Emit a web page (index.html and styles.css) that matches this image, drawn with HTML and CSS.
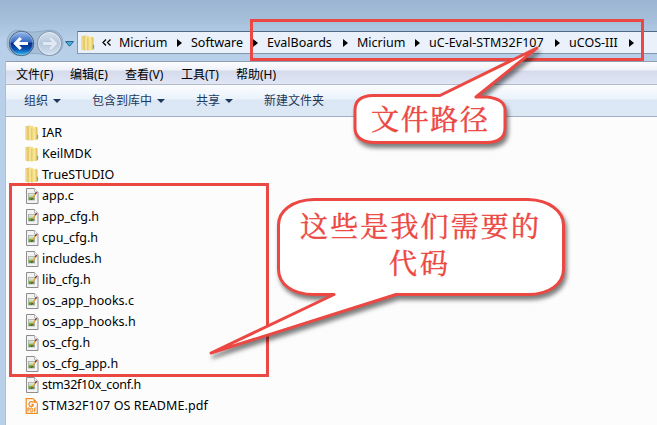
FILE: index.html
```html
<!DOCTYPE html>
<html lang="zh-CN">
<head>
<meta charset="utf-8">
<title>uCOS-III</title>
<link rel="stylesheet" href="styles.css">
</head>
<body>
<svg class="defs" width="0" height="0">
  <defs>
    <linearGradient id="gold" x1="0" x2="1"><stop offset="0" stop-color="#e3c75e"/><stop offset=".5" stop-color="#fbeb9f"/><stop offset="1" stop-color="#dcb94e"/></linearGradient>
    <linearGradient id="blue" x1="0" y1="0" x2="0" y2="1"><stop offset="0" stop-color="#9cbcec"/><stop offset=".42" stop-color="#3c6fc4"/><stop offset=".5" stop-color="#062f86"/><stop offset=".75" stop-color="#0a57b5"/><stop offset="1" stop-color="#35c5f5"/></linearGradient>
    <linearGradient id="pale" x1="0" y1="0" x2="0" y2="1"><stop offset="0" stop-color="#d5e0ec"/><stop offset=".5" stop-color="#b7c9dd"/><stop offset="1" stop-color="#d3e1f0"/></linearGradient>
    <linearGradient id="leaf" x1="0" y1="0" x2="0" y2="1"><stop offset="0" stop-color="#e8efea"/><stop offset=".45" stop-color="#c0d2b0"/><stop offset=".6" stop-color="#82bd2c"/><stop offset="1" stop-color="#2d7d16"/></linearGradient>
    <symbol id="folder" viewBox="0 0 14 16">
      <path d="M.5 1.200 5 .4l1 1v13.200l-2 1-3.500-1z" fill="#e3c86f"/>
      <path d="M4 .8h3.500l1 1.500V14l-4.500 1.500z" fill="#f5e18d"/>
      <path d="M6 2.800 11.500 1.800l1 1v12l-6.500.8z" fill="url(#gold)"/>
      <path d="M1.800 2v12M5 1.500v13.500" stroke="#f6e49d" stroke-width=".8"/>
      <path d="M12.500 9.800v4" stroke="#54a9d6" stroke-width="1.200"/>
    </symbol>
    <symbol id="source" viewBox="0 0 14 16">
      <path d="M1.500.5h8l3.500 3.500v11.500H1.500z" fill="#f3f3f3" stroke="#8d8d8d"/>
      <path d="M9.500.5V4H13" fill="#fff" stroke="#aaa" stroke-width=".8"/>
      <rect x="3.500" y="5.500" width="6" height="6.500" fill="url(#leaf)" stroke="#a3aaa3" stroke-width=".8"/>
      <path d="m7.300 10.300 3.600-5" stroke="#e5a638" stroke-width="1.400"/>
      <path d="m10.300 6 1.300-1.800" stroke="#7e2c34" stroke-width="1.400"/>
      <path d="m6.400 11.500 1.200-1.600" stroke="#333"/>
    </symbol>
    <symbol id="pdf" viewBox="0 0 14 16">
      <path d="M8.500.7H1.200V15.300h11.100V5" fill="none" stroke="#f18a21" stroke-width="1.200"/>
      <path d="M8.500.3v4.500h4.400z" fill="#f18a21"/>
      <path d="M8.300 4.100C5 2.500 3.300 5 4.200 7.200s4 1.900 4-.7H6.400" fill="none" stroke="#f18a21" stroke-width="1.300"/>
      <path d="M2.800 14v-4h1.400v2H2.800M5.800 10h1.100l.8 1v2l-.8 1H5.800zM9.400 14v-4h1.900M9.400 12h1.500" fill="none" stroke="#f18a21" stroke-width=".9"/>
    </symbol>
  </defs>
</svg>
<div class="window">
  <header class="address">
    <svg class="nav" width="64" height="30" viewBox="0 0 64 30">
      <path d="M20 2.500c10 2 14 2 26 0 10-2 17 4 17 12.500s-8 14-17 12c-10-2-14-2-23 0C13 29 7 23 7 15S12 1 20 2.500z" fill="#9db5ce" fill-opacity=".65" stroke="#8297b1" stroke-width=".6"/>
      <circle cx="21.500" cy="15.500" r="12.200" fill="url(#blue)" stroke="#4c627f"/>
      <circle cx="21.500" cy="15.500" r="11.300" fill="none" stroke="#c5e0f4" stroke-opacity=".6" stroke-width=".7"/>
      <path d="M20.800 10 15.500 15.500l5.300 5.500M16 15.500h12" fill="none" stroke="#fff" stroke-width="3.200"/>
      <circle cx="49.500" cy="15.500" r="12" fill="url(#pale)" stroke="#7f91a8"/>
      <circle cx="49.500" cy="15.500" r="11" fill="none" stroke="#e5eef8" stroke-width=".8"/>
      <path d="m50.200 10 5.300 5.500-5.300 5.500M55 15.500H43" fill="none" stroke="#b4c3d4" stroke-width="4"/>
      <path d="m50.200 10 5.300 5.500-5.300 5.500M55 15.500H43" fill="none" stroke="#e1eaf3" stroke-width="2.800"/>
    </svg>
    <svg class="recent" width="9" height="6" viewBox="0 0 9 6"><path d="M.6.6h7.800L4.500 5.200z" fill="#42b8e7" stroke="#245b80"/></svg>
    <nav class="crumbs">
      <svg class="crumb-icon" width="14" height="16"><use href="#folder"/></svg>
      <svg class="more" width="10" height="7" viewBox="0 0 10 7"><path d="M4 .5 1 3.500l3 3M8.500.5l-3 3 3 3" fill="none" stroke="#000" stroke-width="1.300"/></svg>
      <span class="crumb w-micrium">Micrium</span><i class="arrow"></i>
      <span class="crumb w-software">Software</span><i class="arrow"></i>
      <span class="crumb w-boards">EvalBoards</span><i class="arrow"></i>
      <span class="crumb w-micrium">Micrium</span><i class="arrow"></i>
      <span class="crumb w-eval">uC-Eval-STM32F107</span><i class="arrow"></i>
      <span class="crumb w-ucos">uCOS-III</span><i class="arrow"></i>
    </nav>
  </header>
  <div class="frame">
    <nav class="menu">
      <span class="m1">文件(F)</span><span class="m2">编辑(E)</span><span class="m3">查看(V)</span><span class="m4">工具(T)</span><span class="m5">帮助(H)</span>
    </nav>
    <div class="toolbar">
      <span class="t1">组织<i class="down"></i></span><span class="t2">包含到库中<i class="down"></i></span><span class="t3">共享<i class="down"></i></span><span class="t4">新建文件夹</span>
    </div>
    <ul class="files">
      <li><svg><use href="#folder"/></svg><span>IAR</span></li>
      <li><svg><use href="#folder"/></svg><span>KeilMDK</span></li>
      <li><svg><use href="#folder"/></svg><span>TrueSTUDIO</span></li>
      <li><svg><use href="#source"/></svg><span>app.c</span></li>
      <li><svg><use href="#source"/></svg><span>app_cfg.h</span></li>
      <li><svg><use href="#source"/></svg><span>cpu_cfg.h</span></li>
      <li><svg><use href="#source"/></svg><span>includes.h</span></li>
      <li><svg><use href="#source"/></svg><span>lib_cfg.h</span></li>
      <li><svg><use href="#source"/></svg><span>os_app_hooks.c</span></li>
      <li><svg><use href="#source"/></svg><span>os_app_hooks.h</span></li>
      <li><svg><use href="#source"/></svg><span>os_cfg.h</span></li>
      <li><svg><use href="#source"/></svg><span>os_cfg_app.h</span></li>
      <li><svg><use href="#source"/></svg><span class="conf">stm32f10x_conf.h</span></li>
      <li><svg><use href="#pdf"/></svg><span class="readme">STM32F107 OS README.pdf</span></li>
    </ul>
  </div>
</div>
<svg class="notes" width="657" height="425" viewBox="0 0 657 425">
  <g class="outline">
    <rect x="251.500" y="20.500" width="391" height="39"/>
    <rect x="10.500" y="184.500" width="257" height="191"/>
  </g>
  <g class="bubble">
    <path d="M373 95.500H440L537 48 476 97H487Q505 99 505 110V128Q505 142 487 142.500H373Q355 141 355 128V110Q355 96 373 95.500Z"/>
    <path d="M314 199.500H528C549 200 563.500 211 563.500 225V269C563.500 284 549 294.500 528 294.500H396L211 353 334 294.500H314C292 294.500 278.500 284 278.500 269V225C278.500 211 292 200 314 199.500Z"/>
  </g>
  <g class="note-text">
    <text x="371" y="130" textLength="117">文件路径</text>
    <text x="300" y="237" textLength="239">这些是我们需要的</text>
    <text x="389" y="274" textLength="59">代码</text>
  </g>
</svg>
</body>
</html>
```
FILE: styles.css
```css
* { box-sizing: border-box; }
body {
  margin: 0;
  overflow: hidden;
  font: 12.5px/21px "Noto Sans", "Noto Sans CJK SC", sans-serif;
  color: #000;
}
.defs { position: absolute; }
.window {
  width: 657px;
  height: 425px;
  display: flex;
  flex-direction: column;
  background: linear-gradient(#9bb5d2 0, #a5bfdb 20px, #b7cfe8 40px, #b9d0e9 100%);
}
.address {
  height: 61px;
  padding: 28px 0 0;
  display: flex;
  align-items: flex-start;
}
.nav { flex: none; }
.recent { flex: none; margin: 13px 4px 0 1px; }
.crumbs {
  flex: 1;
  height: 23px;
  margin: 3px 0 0 -1px;
  display: flex;
  align-items: center;
  background: #eaf1fa;
  border: 1px solid #8297ad;
  border-top: 1px solid #526983;
  border-right: 0;
  white-space: nowrap;
}
.crumb-icon { margin: 0 7px 0 3px; flex: none; }
.more { margin: 0 7px 0 0; flex: none; }
.crumb { flex: none; line-height: 20px; }
.w-micrium { width: 58px; }
.w-software { width: 62px; }
.w-boards { width: 76px; }
.w-eval { width: 126px; }
.w-ucos { width: 60px; }
.arrow {
  flex: none;
  width: 5px;
  margin-right: 9px;
  border: solid transparent;
  border-width: 4px 0 4px 5px;
  border-left-color: #000;
}
.frame {
  flex: 1;
  margin-left: 5px;
  border-left: 1px solid #a9c0da;
  background: #fcfcfc;
}
.menu {
  height: 24px;
  display: flex;
  padding-left: 10px;
  line-height: 25px;
  background: linear-gradient(#fdfdff 0, #eef1f8 8px, #d6dbec 9px, #e1e6f5 22px);
  border-top: 1px solid #8d9db2;
  border-bottom: 1px solid #b4bac8;
  font-size: 12px;
}
.m1 { width: 54px; }
.m2, .m4 { width: 55px; }
.m3 { width: 56px; }
.toolbar {
  height: 32px;
  display: flex;
  padding-left: 18px;
  line-height: 31px;
  font-size: 12px;
  color: #1e395b;
  background: linear-gradient(#fbfdff 0, #eaf2fb 14px, #dce7f5 15px, #dde8f5 29px);
  border-bottom: 1px solid #a0afc3;
}
.t1 { width: 68px; }
.t2 { width: 104px; }
.t3 { width: 68px; }
.down {
  display: inline-block;
  margin-left: 5px;
  vertical-align: 2px;
  border: solid transparent;
  border-width: 4px 4px 0;
  border-top-color: #1e395b;
}
.files {
  margin: 0;
  padding: 5px 0 0 19px;
  list-style: none;
}
.files li {
  height: 21px;
  display: flex;
  align-items: center;
  gap: 3px;
}
.files svg { width: 14px; height: 16px; }
.conf { letter-spacing: -.3px; }
.readme { letter-spacing: .1px; }
.notes { position: absolute; inset: 0; }
.outline { fill: none; stroke: #ec4843; stroke-width: 3; }
.bubble {
  fill: #fff;
  stroke: #ec4843;
  stroke-width: 3;
  stroke-linejoin: round;
  filter: drop-shadow(2px 4px 2px rgba(0, 0, 0, .5));
}
.note-text {
  font: 28px "Noto Serif CJK SC", "Noto Sans CJK SC", serif;
  fill: #ec4843;
  stroke: #ec4843;
  stroke-width: .45;
}
```
